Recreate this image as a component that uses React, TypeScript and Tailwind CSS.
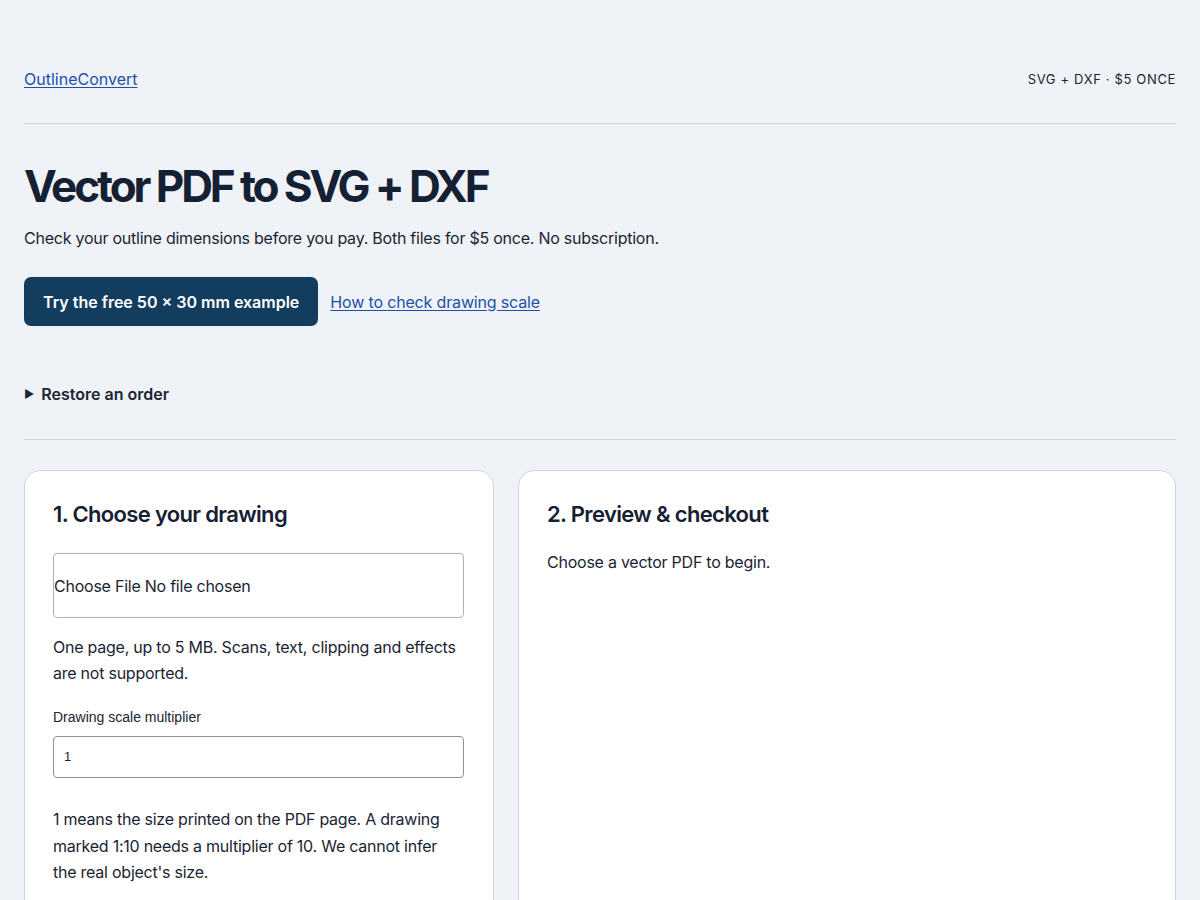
import React from "react";

export default function App() {
  return (
    <div
      className="min-h-[900px] bg-[#eff3f8] text-[#1b2432]"
      style={{ fontFamily: "Inter, 'Noto Sans', sans-serif" }}
    >
      <div className="px-6 pt-[66px]">
        <header className="flex items-center justify-between pb-[31px] border-b border-[#cdd3db]">
          <a href="#" className="text-[16px] leading-[26px] text-[#1e4fa8] underline underline-offset-2">
            OutlineConvert
          </a>
          <span className="text-[13px] leading-[26px] tracking-[0.05em] text-[#1b2432]">SVG + DXF · $5 ONCE</span>
        </header>

        <section className="pt-[36px] pb-[33px] border-b border-[#cdd3db]">
          <h1 className="text-[44px] leading-[52px] font-bold tracking-[-0.07em] text-[#162033]">
            Vector PDF to SVG + DXF
          </h1>
          <p className="mt-[13px] text-[16px] leading-[26px] tracking-[-0.015em]">
            Check your outline dimensions before you pay. Both files for $5 once. No subscription.
          </p>
          <div className="mt-[26px] flex items-center gap-3">
            <button className="h-[49px] px-[19px] rounded-[7px] bg-[#133d5f] text-white text-[16px] font-semibold">
              Try the free 50 × 30 mm example
            </button>
            <a href="#" className="text-[16px] text-[#1e4fa8] underline underline-offset-2 tracking-[-0.01em]">
              How to check drawing scale
            </a>
          </div>
          <div className="mt-[56px] flex items-center gap-[7px] text-[16px] leading-[24px] font-semibold">
            <span className="text-[11px]">▶</span>
            <span>Restore an order</span>
          </div>
        </section>

        <main className="mt-[30px] grid grid-cols-[470px_1fr] gap-[24px] items-start">
          <div className="bg-white border border-[#cfd6df] rounded-[16px] pl-[28px] pr-[29px] pt-[27px] pb-[40px]">
            <h2 className="text-[22px] leading-[32px] font-semibold tracking-[-0.03em] text-[#162033]">1. Choose your drawing</h2>
            <div className="mt-[23px] h-[65px] border border-[#a9b2bd] rounded-[4px] flex items-center text-[16px] tracking-[-0.015em]">
              Choose File No file chosen
            </div>
            <p className="mt-[16px] text-[16px] leading-[26px] tracking-[-0.015em]">
              One page, up to 5 MB. Scans, text, clipping and effects are not supported.
            </p>
            <label className="block mt-[22px] text-[14px] leading-[18px]" style={{ fontFamily: "'Liberation Sans', Arial, sans-serif" }}>
              Drawing scale multiplier
            </label>
            <div className="mt-[10px] h-[42px] border border-[#8a949f] rounded-[4px] flex items-center px-[10px] text-[13px]" style={{ fontFamily: "'Liberation Sans', Arial, sans-serif" }}>
              1
            </div>
            <p className="mt-[28px] pr-[4px] text-[16px] leading-[26.5px] tracking-[-0.015em]">
              1 means the size printed on the PDF page. A drawing marked 1:10 needs a multiplier of 10. We cannot infer the real object's size.
            </p>
          </div>
          <div className="bg-white border border-[#cfd6df] rounded-[16px] px-[28px] pt-[27px] min-h-[500px]">
            <h2 className="text-[22px] leading-[32px] font-semibold tracking-[-0.03em] text-[#162033]">2. Preview &amp; checkout</h2>
            <p className="mt-[19px] text-[16px] leading-[26px] tracking-[-0.015em]">Choose a vector PDF to begin.</p>
          </div>
        </main>
      </div>
    </div>
  );
}
